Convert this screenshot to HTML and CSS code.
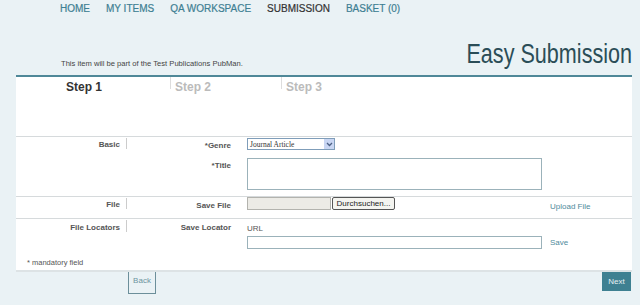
FILE: index.html
```html
<!DOCTYPE html>
<html lang="en">
<head>
    <meta charset="UTF-8">
    <title>Easy Submission</title>
    <link rel="stylesheet" href="styles.css">
</head>
<body>
    <nav class="mainnav">
        <a href="#">HOME</a>
        <a href="#">MY ITEMS</a>
        <a href="#">QA WORKSPACE</a>
        <a href="#" class="current">SUBMISSION</a>
        <a href="#">BASKET (0)</a>
    </nav>

    <div class="titlebar">
        <p class="context">This item will be part of the Test Publications PubMan.</p>
        <h1>Easy Submission</h1>
    </div>

    <div class="panel">
        <div class="steps">
            <div class="step active">Step 1</div>
            <div class="step">Step 2</div>
            <div class="step">Step 3</div>
        </div>

        <div class="row basic-row">
            <div class="sect"><span>Basic</span></div>
            <div class="label">*Genre</div>
            <div class="field">
                <div class="select">
                    <span>Journal Article</span>
                    <span class="arrow">
                        <svg width="7" height="5" viewBox="0 0 7 5"><path d="M1 1 L3.5 3.5 L6 1" fill="none" stroke="#4d6185" stroke-width="1.3"/></svg>
                    </span>
                </div>
            </div>
            <div></div>
            <div></div>
            <div class="label title-label">*Title</div>
            <div class="field"><textarea class="textarea"></textarea></div>
            <div></div>
        </div>

        <div class="row file-row">
            <div class="sect"><span>File</span></div>
            <div class="label">Save File</div>
            <div class="field">
                <span class="filebox"></span><button class="browse">Durchsuchen...</button>
            </div>
            <div class="link up">Upload File</div>
        </div>

        <div class="row loc-row">
            <div class="sect"><span>File Locators</span></div>
            <div class="label">Save Locator</div>
            <div class="field">
                <div class="hint">URL</div>
                <input class="text" type="text">
            </div>
            <div class="link save">Save</div>
        </div>

        <p class="mandatory">* mandatory field</p>
    </div>

    <div class="buttons">
        <a href="#" class="back">Back</a>
        <a href="#" class="next">Next</a>
    </div>
</body>
</html>
```

FILE: styles.css
```css
body {
    margin: 0;
    background: #eaf2f5;
    font-family: 'Liberation Sans', Arial, sans-serif;
    color: #333;
}

.mainnav {
    padding: 2px 0 0 60px;
    height: 18px;
    display: flex;
    gap: 16px;
    font-size: 10px;
}

.mainnav a {
    color: #3e7f93;
    text-decoration: none;
    line-height: 13px;
    -webkit-text-stroke: 0.2px currentColor;
}

.mainnav a.current {
    color: #333;
}

.titlebar {
    display: flex;
    justify-content: space-between;
    align-items: flex-end;
    padding: 0 8px 0 61px;
    height: 55px;
}

.context {
    margin: 0 0 7px;
    font-size: 7.6px;
    color: #444;
}

/* narrow headline */
h1 {
    margin: 0 0 6px;
    font-weight: normal;
    font-size: 27px;
    line-height: 30px;
    color: #2b4d57;
    transform: scaleX(0.8);
    transform-origin: right center;
    white-space: nowrap;
}

.panel {
    margin: 0 8px 0 16px;
    background: #fff;
    border-top: 2px solid #4f8898;
    border-bottom: 2px solid #dde3e5;
}

.steps {
    display: grid;
    grid-template-columns: 154px 111px 1fr;
    height: 59px;
}

.step {
    height: 12px;
    border-left: 1px solid #ddd;
    padding-left: 4px;
    font-size: 12px;
    font-weight: bold;
    line-height: 20px;
    color: #bbb;
}

.step.active {
    border-left: none;
    padding-left: 50px;
    color: #333;
}

.row {
    display: grid;
    grid-template-columns: 111px 120px 303px 1fr;
    border-top: 1px solid #d6dadc;
    font-size: 8px;
}

.row > div {
    padding-top: 1px;
}

.basic-row {
    padding-bottom: 6px;
}

.sect {
    text-align: right;
}

.sect span {
    display: block;
    height: 11px;
    padding-right: 6px;
    border-right: 1px solid #ccc;
    font-weight: bold;
    line-height: 14px;
    color: #555;
}

.label {
    text-align: right;
    padding-right: 16px;
    font-weight: bold;
    line-height: 16px;
    color: #555;
}

.row > .label.title-label {
    padding-top: 4px;
}

.select {
    width: 84px;
    height: 10px;
    border: 1px solid #7f9db9;
    display: flex;
    justify-content: space-between;
    align-items: center;
    font-family: 'Liberation Serif', serif;
    font-size: 7.5px;
    padding-left: 2px;
}

.select .arrow {
    width: 10px;
    height: 10px;
    background: #c9d6f3;
    display: flex;
    align-items: center;
    justify-content: center;
}

.textarea {
    display: block;
    margin: 3px 0 0;
    width: 295px;
    height: 32px;
    box-sizing: border-box;
    border: 1px solid #9bb2ba;
    resize: none;
}

.file-row {
    height: 21px;
}

.file-row > .field {
    padding-top: 0;
    display: flex;
    align-items: flex-start;
}

.filebox {
    width: 84px;
    height: 13px;
    box-sizing: border-box;
    border: 1px solid #b3b3ae;
    background: #ecebe6;
}

.browse {
    width: 63px;
    height: 13px;
    margin: 0 0 0 1px;
    padding: 0;
    border: 1px solid #555;
    border-radius: 2px;
    background: #f4f4f0;
    font-family: 'Liberation Sans', Arial, sans-serif;
    font-size: 8px;
    line-height: 10px;
    color: #222;
}

.link {
    color: #4f8b9c;
}

.row > .link.up {
    padding-top: 5px;
    line-height: 10px;
}

.loc-row .sect span {
    height: 12px;
    line-height: 16px;
}

.hint {
    margin-top: 4px;
    line-height: 10px;
    color: #555;
}

.text {
    display: block;
    margin: 2px 0 0;
    width: 295px;
    height: 13px;
    box-sizing: border-box;
    border: 1px solid #9bb2ba;
    padding: 0;
}

.row > .link.save {
    padding-top: 19px;
    line-height: 10px;
}

.mandatory {
    margin: 0;
    padding: 9px 0 2px 11px;
    font-size: 7.5px;
    line-height: 10px;
    color: #555;
}

.buttons {
    display: flex;
    justify-content: space-between;
    margin: 0 9px 0 128px;
}

.buttons a {
    font-size: 8px;
    text-decoration: none;
}

.back {
    width: 26px;
    height: 21px;
    line-height: 18px;
    text-align: center;
    border: 1px solid #6c8f9a;
    border-top: none;
    color: #6d949f;
}

.next {
    width: 29px;
    height: 19px;
    line-height: 19px;
    text-align: center;
    background: #3e8091;
    color: #e6f0f3;
}
```
